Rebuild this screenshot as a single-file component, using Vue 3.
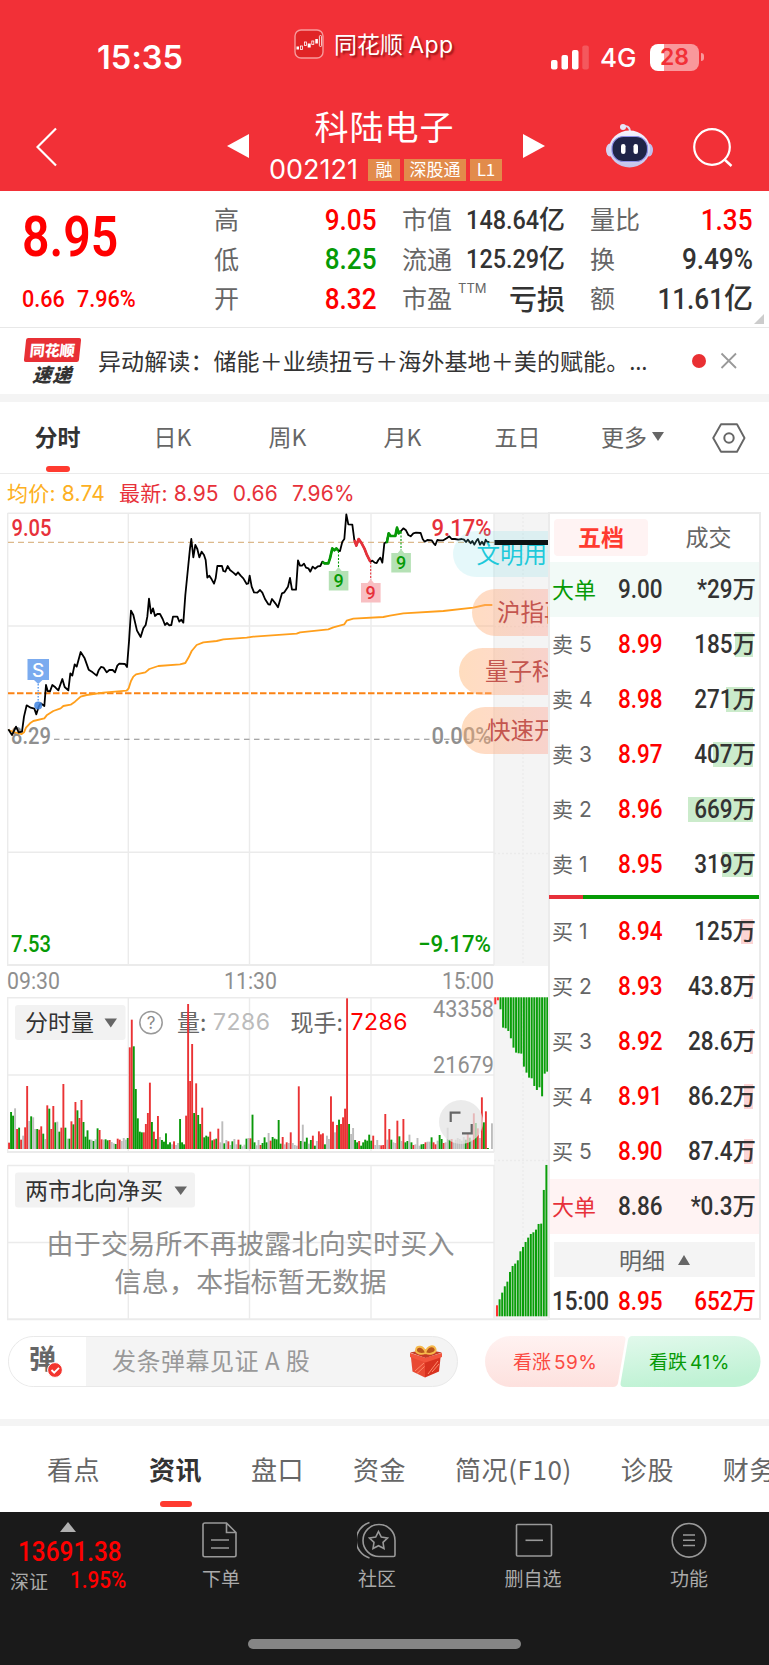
<template>
    <div class="page">
        <header class="header">
            <div class="status">
                <div class="clock">15:35</div>
                <div class="brand">
                    <svg width="30" height="30" viewBox="0 0 30 30">
                        <rect x="1" y="1" width="28" height="28" rx="6" fill="#e02426" stroke="#f79a9c" stroke-width="1.4" />
                        <rect x="2.5" y="17.5" width="2.5" height="3" fill="#fff" />
                        <rect x="6.5" y="17" width="2" height="3.5" fill="none" stroke="#fff" stroke-width=".8" />
                        <rect x="10.5" y="13" width="2" height="3.5" fill="none" stroke="#fff" stroke-width=".8" />
                        <rect x="13.7" y="14.5" width="3" height="4" fill="#fff" />
                        <rect x="17.8" y="12" width="2" height="3.5" fill="none" stroke="#fff" stroke-width=".8" />
                        <rect x="21.3" y="10" width="2.6" height="4.5" fill="#fff" />
                        <rect x="25.4" y="6.5" width="2.2" height="11" rx="1" fill="none" stroke="#fff" stroke-width=".8" />
                    </svg>
                    <span>同花顺 <span class="app">App</span></span>
                </div>
                <svg class="signal" width="40" height="26" viewBox="0 0 40 26">
                    <rect x="1" y="15" width="6.5" height="9.5" rx="2" fill="#fff" />
                    <rect x="11.5" y="10" width="6.5" height="14.5" rx="2" fill="#fff" />
                    <rect x="22" y="5" width="6.5" height="19.5" rx="2" fill="#fff" />
                    <rect x="32.3" y="0.5" width="6.5" height="24" rx="2" fill="#f4585d" />
                </svg>
                <div class="net">4G</div>
                <div class="battery">28</div>
                <div class="cap"></div>
            </div>
            <div class="nav">
                <svg class="back" width="22" height="40" viewBox="0 0 22 40">
                    <path d="M20 1.5L1.5 20L20 38.5" fill="none" stroke="#fff" stroke-width="2.2" />
                </svg>
                <div class="arrow left"></div>
                <div class="stock">
                    <div class="name">科陆电子</div>
                    <div class="code">
                        <span class="num">002121</span>
                        <i>融</i><i class="wide">深股通</i><i>L1</i>
                    </div>
                </div>
                <div class="arrow right"></div>
                <svg class="robot" width="50" height="46" viewBox="0 0 50 46">
                    <defs>
                        <linearGradient id="head" x1="0" y1="0" x2="0" y2="1">
                            <stop offset="0" stop-color="#f6f4fc" />
                            <stop offset="1" stop-color="#c3c3ec" />
                        </linearGradient>
                    </defs>
                    <path d="M17 4C22 2 25 4 25 9" fill="none" stroke="#dcdcf2" stroke-width="1.8" />
                    <circle cx="18" cy="4" r="3" fill="#e6e6f8" />
                    <ellipse cx="5" cy="27" rx="4" ry="6.5" fill="#d4d3f2" />
                    <ellipse cx="44" cy="27" rx="4" ry="6.5" fill="#bfc0ee" />
                    <ellipse cx="24.5" cy="26" rx="20.5" ry="18.5" fill="url(#head)" />
                    <rect x="7" y="13.5" width="35.5" height="25" rx="11.500" fill="#1f2447" stroke="#8d8fe8" stroke-width="1.2" />
                    <rect x="16" y="21" width="4.5" height="10" rx="2.2" fill="#fff" />
                    <rect x="28.5" y="21" width="4.5" height="10" rx="2.2" fill="#fff" />
                </svg>
                <svg class="search" width="42" height="42" viewBox="0 0 42 42">
                    <circle cx="20" cy="20" r="17.8" fill="none" stroke="#fff" stroke-width="2.2" />
                    <path d="M32 32L39.5 39" stroke="#fff" stroke-width="2.4" />
                </svg>
            </div>
        </header>

        <section class="quote">
            <div class="price">
                <div class="last"><span class="din">8.95</span></div>
                <div class="chg"><span class="din">0.66</span><span class="din">7.96%</span></div>
            </div>
            <dl v-for="(col, c) in quotes" :key="c" :class="'col' + c">
                <div v-for="q in col" :key="q.k">
                    <dt>{{ q.k }}<sup v-if="q.sup">{{ q.sup }}</sup></dt>
                    <dd :class="q.cls"><span v-if="q.v" class="din">{{ q.v }}</span>{{ q.u }}</dd>
                </div>
            </dl>
            <div class="corner"></div>
        </section>

        <section class="news">
            <div class="express">
                <b>同花顺</b>
                <em>速递</em>
            </div>
            <p>异动解读：储能＋业绩扭亏＋海外基地＋美的赋能。<span>…</span></p>
            <div class="dot"></div>
            <svg width="18" height="18" viewBox="0 0 18 18"><path d="M1.5 1.5L16 16M16 1.5L1.5 16" stroke="#999" stroke-width="1.8" /></svg>
        </section>

        <nav class="periods">
            <div v-for="(p, i) in periods" :key="p" :class="{ on: i === 0 }">{{ p }}<u v-if="i === 5"></u></div>
            <svg width="34" height="30" viewBox="0 0 34 30">
                <path d="M9 1.2H25L32.5 15L25 28.8H9L1.2 15Z" fill="none" stroke="#666" stroke-width="1.9" stroke-linejoin="round" />
                <circle cx="17" cy="15" r="4.7" fill="none" stroke="#666" stroke-width="2" />
            </svg>
        </nav>

        <div class="legend">
            <span class="avg">均价: 8.74</span><span>最新: 8.95</span><span>0.66</span><span>7.96%</span>
        </div>

        <div class="board">
            <svg class="chart" width="548" height="809" viewBox="0 512 548 809">
                <!-- grid -->
                <rect x="494" y="513" width="54" height="453" fill="#f4f4f4" />
                <rect x="494" y="997" width="54" height="322" fill="#f4f4f4" />
                <g fill="none" stroke="#ebebeb" stroke-width="1.4">
                    <path d="M7.7 513.3H548M7.7 513V965M494 513V965M7.7 626H494M7.7 852.3H494" />
                    <path d="M7.7 997.7H494V1152M7.7 997V1152M7.7 1075H494" />
                    <path d="M7.7 1165.5H494V1319M7.7 1165V1319M7.7 1242.5H494" />
                    <path d="M128.3 513V965M249.5 513V965M371 513V965M128.3 997V1152M249.5 997V1152M371 997V1152M128.3 1165V1319M249.5 1165V1319M371 1165V1319" />
                    <path d="M7 965H494M7 1152H494M7 1319.2H548" stroke-width="2" />
                    <path d="M523 513V965M523 998V1319M494 626.5H548M494 853.5H548M494 1160.5H548" stroke-dasharray="2 2" />
                </g>

                <!-- price labels -->
                <g class="lbl">
                    <text x="11.5" y="535.5" textLength="40" lengthAdjust="spacingAndGlyphs" fill="#e7313a">9.05</text>
                    <text x="11" y="743.5" textLength="40" lengthAdjust="spacingAndGlyphs" fill="#8f8f8f">8.29</text>
                    <text x="431.5" y="743.5" textLength="60" lengthAdjust="spacingAndGlyphs" fill="#8f8f8f">0.00%</text>
                    <text x="11" y="952" textLength="40" lengthAdjust="spacingAndGlyphs" fill="#069a06">7.53</text>
                    <text x="418" y="952" textLength="73" lengthAdjust="spacingAndGlyphs" fill="#069a06">−9.17%</text>
                </g>
                <g class="lbl thin" fill="#8f8f8f">
                    <text x="7" y="989" textLength="53" lengthAdjust="spacingAndGlyphs">09:30</text>
                    <text x="224" y="989" textLength="53" lengthAdjust="spacingAndGlyphs">11:30</text>
                    <text x="442" y="989" textLength="52" lengthAdjust="spacingAndGlyphs">15:00</text>
                    <text x="433" y="1017" textLength="61" lengthAdjust="spacingAndGlyphs">43358</text>
                    <text x="433" y="1073" textLength="61" lengthAdjust="spacingAndGlyphs">21679</text>
                </g>

                <path d="M8 542.3H494" stroke="#dcb98c" stroke-width="1.2" stroke-dasharray="6 4" />
                <path d="M54 739.3H490" stroke="#8a8a8a" stroke-width="1.1" stroke-dasharray="5.5 4.5" />
                <path d="M8 693.3H493" stroke="#fb8314" stroke-width="2" stroke-dasharray="6.5 2.5" />

                <!-- price and average lines, plotted at three units per pixel -->
                <g transform="translate(0 395) scale(.33333)" fill="none" stroke-linejoin="round">
                    <polyline :points="avgLine" stroke="#ff9f1c" stroke-width="5.5" />
                    <polyline :points="priceLine" stroke="#000" stroke-width="5.4" />
                    <polyline points="967,500 973,505 985,505 990,490 997,460 1003,466 1009,460 1015,467" stroke="#069a06" stroke-width="8" />
                    <polyline points="1063,435 1069,452 1076,432 1085,445 1093,460 1100,478 1111,500" stroke="#e7313a" stroke-width="8" />
                    <polyline points="1158,443 1161,441 1166,415 1172,423 1186,423 1191,398 1196,415 1203,408" stroke="#069a06" stroke-width="8" />
                </g>
                <text class="lbl" x="431.5" y="535.5" textLength="60" lengthAdjust="spacingAndGlyphs" fill="#e7313a">9.17%</text>

                <!-- signal flags -->
                <g v-for="f in flags" :key="f.x">
                    <path :d="`M${f.x} ${f.from}V${f.y - 3}`" :stroke="f.color" stroke-width="1.1" stroke-dasharray="2 1.5" />
                    <path :d="`M${f.x - 9.7} ${f.y}h6.5l3.2 -4l3.2 4h6.7v19.5h-19.6z`" :fill="f.bg" />
                    <text class="nine" :x="f.x" :y="f.y + 15.6" :fill="f.color">9</text>
                </g>
                <path d="M27.5 659H49V680H42.5L38.2 684L34 680H27.5Z" fill="#7babef" />
                <path d="M38.2 684V703" stroke="#5a9af0" stroke-width="1.4" stroke-dasharray="1.6 1.4" />
                <circle cx="38.2" cy="705.5" r="4" fill="#3f84e0" opacity=".85" />
                <text class="sell" x="38.2" y="676.5">S</text>

                <!-- floating comments, cut by the panel edge -->
                <defs>
                    <linearGradient id="peach" gradientUnits="userSpaceOnUse" x1="455" y1="0" x2="548" y2="0">
                        <stop offset="0" stop-color="#ffb46e" stop-opacity=".45" />
                        <stop offset="1" stop-color="#ff9d8b" stop-opacity=".38" />
                    </linearGradient>
                </defs>
                <g class="bubble">
                    <path d="M548 531H476A23 23 0 0 0 476 577H548Z" fill="#62d4e3" fill-opacity=".17" />
                    <text x="476.5" y="563" fill="#1fc9da">文明用语</text>
                    <g v-for="b in bubbles" :key="b.text">
                        <path :d="`M548 ${b.y}H${b.x + 23.5}a23.5 23.5 0 0 0 0 47H548Z`" fill="url(#peach)" />
                        <text :x="b.tx" :y="b.y + 32" fill="#c4564f">{{ b.text }}</text>
                    </g>
                </g>
                <rect x="494.5" y="540" width="53.5" height="5" fill="#0b1213" />

                <!-- volume -->
                <rect x="15" y="1005" width="110.5" height="35" rx="3" fill="#f2f2f2" />
                <g class="vol">
                    <text x="25" y="1031" fill="#333">分时量</text>
                    <path d="M104.5 1018.5H117L110.8 1027.5Z" fill="#666" />
                    <circle cx="151" cy="1022.6" r="11.2" fill="none" stroke="#999" stroke-width="1.5" />
                    <text class="q" x="151" y="1029">?</text>
                    <text x="177" y="1031" fill="#666">量:</text>
                    <text class="fig" x="213" y="1030" textLength="57" fill="#bbb">7286</text>
                    <text x="290.5" y="1031" fill="#666">现手:</text>
                </g>
                <rect v-for="b in bars" :key="b.x" :x="b.x" :y="1149 - b.h" width="1.9" :height="b.h" :fill="b.color" />
                <text class="fig" x="350.5" y="1030" textLength="57" fill="#f00">7286</text>
                <circle cx="461" cy="1122" r="22" fill="#e4e4e4" fill-opacity=".75" />
                <path d="M450.7 1122V1112.7H460.5M471.7 1124V1133.3H462" fill="none" stroke="#666" stroke-width="2.2" />

                <!-- depth histogram -->
                <rect v-for="(h, i) in sellDepth" :key="'s' + i" :x="494.3 + i * 2.6" y="997.3" width="2" :height="h / 3" :fill="i < 2 ? '#f33' : '#0a9e0a'" />
                <rect v-for="(h, i) in buyDepth" :key="'b' + i" :x="496 + i * 2.6" :y="1316.3 - h / 3" width="2" :height="h / 3" :fill="i < 1 ? '#f33' : '#0a9e0a'" />

                <!-- northbound -->
                <rect x="15" y="1172.5" width="180" height="35" rx="3" fill="#f2f2f2" />
                <g class="vol">
                    <text x="25" y="1198.5" textLength="138" fill="#333">两市北向净买</text>
                    <path d="M174.5 1186.5H187L180.7 1195Z" fill="#666" />
                </g>
                <g class="msg">
                    <text x="46.5" y="1254" textLength="408">由于交易所不再披露北向实时买入</text>
                    <text x="114.5" y="1292" textLength="272">信息，本指标暂无数据</text>
                </g>
            </svg>

            <aside class="depth">
                <div class="switch"><b>五档</b><span>成交</span></div>
                <div v-for="r in sells" :key="r.k" class="row" :class="{ big: r.big }">
                    <span>{{ r.k }}</span>
                    <strong><span class="din">{{ r.p }}</span></strong>
                    <em><i :style="{ width: r.w + 'px' }"></i><span class="din">{{ r.v }}</span><s>万</s></em>
                </div>
                <div class="ratio"><i></i></div>
                <div v-for="r in buys" :key="r.k" class="row buy" :class="{ big: r.big }">
                    <span>{{ r.k }}</span>
                    <strong><span class="din">{{ r.p }}</span></strong>
                    <em><i :style="{ width: r.w + 'px' }"></i><span class="din">{{ r.v }}</span><s>万</s></em>
                </div>
                <div class="detail">明细<u></u></div>
                <div class="row deal">
                    <span><span class="din">15:00</span></span>
                    <strong><span class="din">8.95</span></strong>
                    <em><span class="din">652</span><s>万</s></em>
                </div>
            </aside>
        </div>

        <div class="danmu">
            <div class="field">
                <div class="toggle">
                    <b>弹</b>
                    <svg width="16" height="16" viewBox="0 0 16 16">
                        <circle cx="8" cy="8" r="7.4" fill="#f3352f" stroke="#fff" stroke-width="1" />
                        <path d="M4.5 8L7.2 10.6L12 5.8" fill="none" stroke="#fff" stroke-width="1.9" />
                    </svg>
                </div>
                <span>发条弹幕见证 A 股</span>
                <svg class="gift" width="34" height="36" viewBox="0 0 34 36">
                    <path d="M1.5 9.5L16 14V33.5L3.5 27.5Z" fill="#e94a33" />
                    <path d="M32 9.5L16 14V33.5L30 27.5Z" fill="#d8321f" />
                    <path d="M1 8.5L17 5.5L33 8.5L16.5 14Z" fill="#c43a26" />
                    <path d="M1 9L16.5 14L33 9V13L16.5 18.5L1 13Z" fill="#f2553d" />
                    <path d="M6 27L15 19M8 29.5L15.5 22.5M19 30L29 17M23 28L30 20" stroke="#ff8a6a" stroke-width="1" />
                    <path d="M16.5 9C12 11 6 9 7 5.5C8 1.5 14 1.5 16.5 8C19 1 25 1 26.5 5C27.5 9 21 11 16.5 9Z" fill="#b8561c" stroke="#f6b94b" stroke-width="1.9" />
                </svg>
            </div>
            <div class="vote">
                <svg width="276" height="51" viewBox="0 0 276 51">
                    <defs>
                        <linearGradient id="up" x1="0" y1="0" x2="0" y2="1">
                            <stop offset="0" stop-color="#fff2f1" />
                            <stop offset="1" stop-color="#fde1de" />
                        </linearGradient>
                        <linearGradient id="down" x1="0" y1="0" x2=".3" y2="1">
                            <stop offset="0" stop-color="#e2f9ec" />
                            <stop offset="1" stop-color="#bff2d4" />
                        </linearGradient>
                    </defs>
                    <path d="M25.5 0H137Q141 0 140.4 4L133 47Q132 51 128 51H25.5A25.5 25.5 0 0 1 25.5 0Z" fill="url(#up)" />
                    <path d="M147 0H250A25.5 25.5 0 0 1 250 51H139Q135 51 135.6 47L143 4Q144 0 147 0Z" fill="url(#down)" />
                </svg>
                <div class="votes"><span>看涨<b>59%</b></span><span class="fall">看跌<b>41%</b></span></div>
            </div>
        </div>

        <nav class="sections">
            <div v-for="s in sections" :key="s" :class="{ on: s === '资讯' }">{{ s }}</div>
        </nav>

        <footer class="bottom">
            <div class="bar">
                <div class="index">
                    <u></u>
                    <div class="point"><span class="din">13691.38</span></div>
                    <div class="market">深证<span class="din">1.95%</span></div>
                </div>
                <div class="item">
                    <svg width="40" height="38" viewBox="0 0 40 38">
                        <path d="M4 2H25.5L35 11.5V34Q35 35.7 33.3 35.7H3.7Q2 35.7 2 34V3.700Q2 2 4 2ZM25.5 2V11.5H35M10 19H28M10 27H28" />
                    </svg>
                    下单
                </div>
                <div class="item">
                    <svg width="40" height="38" viewBox="0 0 40 38">
                        <path d="M22 3.5A16 16 0 1 0 22 35.5H36.5Q38 35.5 38 34V19.5A16 16 0 0 0 22 3.5Z" />
                        <path d="M12.5 1.5A18.5 18.5 0 0 0 12.5 37" />
                        <path d="M21.5 10.500L24.3 16L30.5 17L26 21.3L27 27.500L21.5 24.700L16 27.500L17 21.300L12.5 17L18.7 16Z" />
                    </svg>
                    社区
                </div>
                <div class="item">
                    <svg width="40" height="38" viewBox="0 0 40 38">
                        <rect x="3.5" y="3.5" width="35" height="31.5" rx="1" />
                        <path d="M12.5 19.3H30" />
                    </svg>
                    删自选
                </div>
                <div class="item">
                    <svg width="40" height="38" viewBox="0 0 40 38">
                        <circle cx="20" cy="19.3" r="16.8" />
                        <path d="M14 14H26M14 19.3H26M14 24.5H26" />
                    </svg>
                    功能
                </div>
            </div>
            <div class="home"></div>
        </footer>
    </div>
</template>

<script setup>
const periods = ['分时', '日K', '周K', '月K', '五日', '更多'];
const sections = ['看点', '资讯', '盘口', '资金', '简况(F10)', '诊股', '财务'];

const quotes = [
    [
        { k: '高', v: '9.05', cls: 'red' },
        { k: '低', v: '8.25', cls: 'green' },
        { k: '开', v: '8.32', cls: 'red' },
    ],
    [
        { k: '市值', v: '148.64', u: '亿' },
        { k: '流通', v: '125.29', u: '亿' },
        { k: '市盈', sup: 'TTM', u: '亏损', cls: 'loss' },
    ],
    [
        { k: '量比', v: '1.35', cls: 'red' },
        { k: '换', v: '9.49%' },
        { k: '额', v: '11.61', u: '亿' },
    ],
];

const sells = [
    { k: '大单', p: '9.00', v: '*29', w: 0, big: true },
    { k: '卖 5', p: '8.99', v: '185', w: 18 },
    { k: '卖 4', p: '8.98', v: '271', w: 27 },
    { k: '卖 3', p: '8.97', v: '407', w: 40 },
    { k: '卖 2', p: '8.96', v: '669', w: 65 },
    { k: '卖 1', p: '8.95', v: '319', w: 31 },
];
const buys = [
    { k: '买 1', p: '8.94', v: '125', w: 12.5 },
    { k: '买 2', p: '8.93', v: '43.8', w: 4.5 },
    { k: '买 3', p: '8.92', v: '28.6', w: 3 },
    { k: '买 4', p: '8.91', v: '86.2', w: 9 },
    { k: '买 5', p: '8.90', v: '87.4', w: 9 },
    { k: '大单', p: '8.86', v: '*0.3', w: 0, big: true },
];

const flags = [
    { x: 338.5, y: 571, from: 551, color: '#069a06', bg: '#b5e1b5' },
    { x: 370.7, y: 583, from: 562, color: '#e7313a', bg: '#f8bfc2' },
    { x: 401, y: 553, from: 532, color: '#069a06', bg: '#b5e1b5' },
];

const bubbles = [
    { x: 472, y: 589, tx: 497, text: '沪指再' },
    { x: 459, y: 648, tx: 485, text: '量子科' },
    { x: 461.5, y: 707, tx: 487, text: '快速开' },
];

const priceLine = `25,1003 36,1020 48,995 56,1012 66,1010 72,965 80,931 92,938 103,941 109,958 116,935 122,925 133,933
138,870 143,888 150,889 157,870 166,877 175,886 187,852 194,876 205,886 211,835 217,842 224,808 230,815 242,771 254,790
266,824 278,832 290,842 296,826 303,816 311,818 320,832 328,825 338,825 345,832 352,812 358,806 375,807 381,816 387,740
393,647 400,660 411,707 422,726 430,700 437,690 442,665 447,611 453,655 459,640 465,663 472,657 480,657 488,672 495,690
501,684 508,691 514,690 519,665 532,665 538,680 544,674 550,683 556,600 565,510 570,460 574,432 580,487 586,450 592,462
598,487 605,470 612,480 617,495 622,548 628,542 635,553 642,566 647,550 652,513 666,513 670,528 676,530 683,513 690,525
700,533 708,540 714,532 722,542 730,550 740,567 745,565 749,542 755,575 762,592 772,593 780,585 787,593 795,612 805,628
810,629 816,612 826,625 834,637 846,595 853,592 864,575 870,549 876,584 888,584 894,496 900,512 906,512 912,506 918,518
925,520 931,530 938,515 945,521 954,514 961,513 967,500 973,505 985,505 990,490 997,460 1003,466 1009,460 1015,467
1020,468 1027,440 1033,432 1039,358 1045,388 1057,389 1063,435 1069,452 1076,432 1085,445 1093,460 1100,478 1111,500
1117,497 1124,503 1130,504 1135,495 1141,488 1147,503 1153,445 1160,441 1166,415 1172,423 1186,423 1191,398 1196,415
1203,408 1210,400 1218,406 1225,420 1232,424 1240,415 1248,413 1262,414 1268,432 1274,440 1282,435 1295,436 1301,445
1306,450 1312,435 1320,436 1330,436 1340,430 1348,424 1355,432 1365,432 1375,434 1385,432 1392,434 1398,441 1404,434
1412,445 1417,438 1423,449 1430,436 1434,432 1440,449 1446,440 1452,450 1457,434 1462,441 1468,441`;

const avgLine = `25,1005 45,1012 65,1017 72,1012 78,998 90,985 100,978 133,970 140,961 160,948 182,940 190,933 212,929
225,920 242,905 260,900 310,893 380,887 386,880 393,858 400,845 408,838 436,832 448,822 475,813 540,808 556,804 566,787
575,768 590,750 610,742 650,738 670,733 740,728 760,725 890,716 900,712 985,703 1000,697 1033,688 1040,677 1060,671
1150,666 1170,662 1210,655 1330,648 1420,638 1455,630 1477,630`;

// one entry per minute: r up, g down, x flat
const volumes = `r19 g111 g100 x122 r60 g64 r28 x40 r65 r189 x84 g98 x95 x60 g60 r58 r68 g46 x30 r131 g121 r60 r129 g80 x82
g52 r64 r195 g64 x31 g31 r83 g74 r141 g116 r93 r147 g81 g37 g56 g28 x28 g24 x29 g62 r57 r29 x28 g29 g26 r27 x21 x17 g15
r31 r28 x24 x33 x28 g33 r305 r388 g308 g180 g92 g52 g50 r50 r75 r108 r199 g81 r52 g30 r99 x36 g27 g22 g47 g14 g20 x14 r23
x12 x18 g90 g20 g14 r100 r435 r204 r315 g108 r197 g102 g75 r124 g35 g40 g37 r52 g26 r29 g31 r61 x20 x83 g17 x27 r23 x12
g23 x30 x14 r28 g13 x8 x13 g31 x33 r32 g103 g20 x11 x27 r12 g18 g35 g20 x48 r25 g36 g31 g29 g87 g16 r36 x14 r20 x18 r50
x18 x12 x10 r188 g24 x73 g22 g34 x16 g27 r40 g10 x24 r53 r44 r47 g14 x40 x30 r158 r82 x50 r72 g88 r75 r95 r121 r452 g75
x45 x63 g27 g20 r24 g10 g20 g28 g25 g43 g25 r40 x12 x27 x12 r11 r12 r105 x28 r60 g28 x20 x18 r85 g38 x24 r90 g20 g24 x43
g20 r12 x14 x33 x10 g14 g15 r20 x22 x22 g35 r20 r14 x25 g42 g30 r18 x20 x64 g28 r30 x20 x28 x33 x30 x25 x36 g28 r45 g34
x28 r107 g78 r62 x33 r155 g80 r113 g3 x0 x77`;
const palette = { r: '#ea3335', g: '#0a980a', x: '#bdbdbd' };
const bars = volumes.split(/\s+/).map((s, i) => ({
    x: 8.1 + i * 2.012,
    h: Number(s.slice(1)) / 3,
    color: palette[s[0]],
}));

const sellDepth = [21, 9, 36, 91, 93, 101, 123, 151, 166, 168, 169, 208, 226, 241, 243, 266, 278, 270, 297, 229, 223];
const buyDepth = [33, 51, 71, 90, 104, 133, 151, 158, 168, 195, 208, 223, 236, 247, 252, 260, 277, 278, 379, 454];
</script>

<style>
body {
    margin: 0;
    background: #fff;
}
</style>

<style scoped>
.page {
    width: 769px;
    height: 1665px;
    overflow: hidden;
    font-family: "Noto Sans CJK SC", sans-serif;
    font-size: 23px;
    line-height: 1;
    color: #333;
    background: #fff;
}

svg {
    display: block;
    flex: none;
}

.din {
    display: inline-block;
    font-family: Roboto, "Noto Sans CJK SC", sans-serif;
    font-weight: 500;
    transform: scaleX(0.9);
    transform-origin: right center;
}

.red {
    color: #f00;
}

.green {
    color: #069a06;
}

.header {
    height: 191px;
    background: #f23037;
    color: #fff;
}

.status {
    height: 100px;
    display: flex;
    align-items: flex-start;
    white-space: nowrap;
}

.clock {
    width: 197px;
    padding: 42px 0 0 97px;
    font: 600 32.5px/1 Inter, sans-serif;
    letter-spacing: 0.1px;
}

.brand {
    width: 256px;
    display: flex;
    align-items: center;
    gap: 10px;
    padding-top: 29px;
    text-shadow: 2px 2px 2px rgba(90, 0, 0, 0.6);
}

.app {
    font-family: Inter, sans-serif;
    letter-spacing: 0.5px;
}

.signal {
    margin-top: 45px;
}

.net {
    width: 48px;
    padding: 45px 0 0 10px;
    box-sizing: border-box;
    font: 500 26px/1 Inter, sans-serif;
}

.battery {
    width: 49px;
    height: 27px;
    margin-top: 44px;
    margin-left: 12px;
    border-radius: 8px;
    background: linear-gradient(90deg, #fff 14px, #f9989b 14px);
    color: #f23037;
    font: 600 23px/27px Inter, sans-serif;
    text-align: center;
}

.cap {
    width: 2.5px;
    height: 8px;
    margin: 53px 0 0 2px;
    border-radius: 0 3px 3px 0;
    background: #f9989b;
}

.nav {
    height: 91px;
    display: flex;
    align-items: flex-start;
}

.back {
    margin: 27px 0 0 36px;
}

.arrow {
    border: solid transparent;
    border-width: 12.5px 0;
    margin-top: 34px;
}

.arrow.left {
    border-right: 22px solid #fff;
    margin-left: 169px;
}

.arrow.right {
    border-left: 22px solid #fff;
}

.stock {
    width: 274px;
    padding-top: 9px;
    text-align: center;
}

.name {
    font-size: 34px;
    height: 50px;
    letter-spacing: 1px;
    padding-right: 3px;
}

.code {
    display: flex;
    align-items: center;
    margin-left: 20px;
}

.num {
    font: 400 27px/22px Inter, sans-serif;
    margin-right: 10px;
}

.code i {
    width: 32px;
    height: 22px;
    margin-right: 4px;
    background: #e28b4b;
    font-style: normal;
    font-size: 17px;
    line-height: 20px;
}

.code .wide {
    width: 62px;
}

.robot {
    margin: 23px 0 0 60px;
}

.search {
    margin: 27px 0 0 37px;
}

.quote {
    height: 137px;
    box-sizing: border-box;
    border-bottom: 1px solid #e8e8e8;
    display: flex;
}

.price {
    width: 214px;
    box-sizing: border-box;
    padding-left: 22px;
    color: #f00;
}

.price .din {
    transform-origin: left center;
}

.last {
    margin-top: 17px;
    font-size: 56px;
    height: 70px;
    margin-top: 13px;
    height: 83px;
}

.last .din {
    font-weight: 600;
    transform: scaleX(0.86);
}

.chg {
    display: flex;
    font-size: 24px;
    gap: 7px;
}

.quote dl {
    margin: 8px 0 0;
}

.quote dl > div {
    display: flex;
    justify-content: space-between;
    align-items: center;
    height: 39.5px;
}

.quote dt {
    display: flex;
    font-size: 25px;
    color: #666;
}

.quote dd {
    margin: 0;
    font-size: 29px;
    font-weight: 500;
    white-space: nowrap;
}

.quote sup {
    width: 0;
    margin: -3px 0 0 6px;
    font: 13px/1 Inter, sans-serif;
}

.quote .col0 {
    width: 163px;
}

.quote .col1 {
    width: 163px;
    margin-left: 25px;
}

.quote .col1 dd {
    font-size: 26px;
}

.quote .col1 .loss {
    font-size: 28px;
}

.quote .col2 {
    width: 163px;
    margin-left: 25px;
}

.corner {
    align-self: flex-end;
    margin: 0 0 3px 1px;
    border-left: 10px solid transparent;
    border-bottom: 10px solid #ccc;
}

.news {
    height: 66px;
    display: flex;
    align-items: center;
    border-bottom: 8px solid #f4f4f4;
}

.express {
    width: 55px;
    margin-left: 25px;
    text-align: center;
}

.express b {
    display: block;
    height: 24px;
    border-radius: 2px;
    background: #e83035;
    color: #fff;
    font-size: 15px;
    font-weight: 900;
    line-height: 24px;
    transform: skewX(-6deg);
}

.express em {
    display: block;
    height: 23px;
    font-size: 19px;
    font-weight: 900;
    line-height: 23px;
    letter-spacing: 1px;
    transform: skewX(-4deg);
}

.news p {
    width: 592px;
    margin: 0 0 0 18px;
    font-size: 23px;
    letter-spacing: 0.1px;
    white-space: nowrap;
}

.news p span {
    font-family: "Noto Sans", sans-serif;
}

.dot {
    width: 14px;
    height: 14px;
    margin: 0 14px 0 2px;
    border-radius: 50%;
    background: #e93033;
}

.periods {
    height: 71px;
    display: grid;
    grid-template-columns: repeat(6, 115px) 34px;
    align-items: center;
    border-bottom: 1px solid #ebebeb;
    color: #666;
    font-size: 23px;
}

.periods > div {
    height: 71px;
    display: flex;
    align-items: center;
    justify-content: center;
    box-sizing: border-box;
    padding-bottom: 2px;
    position: relative;
}

.periods svg {
    margin-left: 22px;
}

.periods .on,
.sections .on {
    color: #333;
    font-weight: 700;
}

.periods .on::after {
    content: "";
    position: absolute;
    bottom: 1px;
    width: 24px;
    height: 6px;
    border-radius: 3px;
    background: #ff3b30;
}

.periods u {
    margin-left: 5px;
    border: 6px solid transparent;
    border-top: 9px solid #666;
    border-bottom: 0;
}

.legend {
    height: 38px;
    display: flex;
    align-items: center;
    gap: 14px;
    padding-left: 7px;
    color: #e7313a;
    font: 21px/1 Inter, "Noto Sans CJK SC", sans-serif;
    letter-spacing: 0.2px;
}

.legend .avg {
    color: #fdb022;
}

.board {
    display: flex;
    height: 809px;
}

.chart {
    overflow: hidden;
}

.lbl,
.lbl text {
    font: 500 23px Roboto, sans-serif;
}

.lbl.thin text {
    font-weight: 400;
}

.nine {
    font: 500 18px Roboto, sans-serif;
    text-anchor: middle;
}

.sell {
    font: 500 19px Inter, sans-serif;
    text-anchor: middle;
    fill: #fff;
}

.bubble text {
    font-size: 23.5px;
}

.vol text {
    font-size: 23px;
}

.vol .q {
    font: 17px Inter, sans-serif;
    text-anchor: middle;
    fill: #888;
}

.fig,
.vol .fig {
    font: 23px Inter, sans-serif;
}

.msg text {
    font-size: 27px;
    fill: #8e8e8e;
}

.depth {
    width: 213px;
    height: 808px;
    box-sizing: border-box;
    border: 2px solid #ebebeb;
}

.switch {
    display: flex;
    height: 48px;
    box-sizing: border-box;
    padding: 5px 4px;
    text-align: center;
    line-height: 34px;
}

.switch b {
    width: 94px;
    height: 37px;
    border-radius: 4px;
    background: #fff3f3;
    color: #ff3b30;
}

.switch span {
    flex: 1;
    padding-left: 14px;
    color: #666;
}

.row {
    height: 55px;
    display: grid;
    grid-template-columns: 66px 50px 1fr;
    align-items: center;
    padding: 0 3px 0 2px;
    font: 21px/1 Inter, "Noto Sans CJK SC", sans-serif;
    color: #666;
    white-space: nowrap;
}

.row strong {
    font-size: 25px;
    color: #f00;
}

.row strong .din {
    transform-origin: left center;
}

.row em {
    display: flex;
    align-items: center;
    position: relative;
    justify-self: end;
    font-style: normal;
    font-weight: 500;
    color: #333;
}

.row em .din {
    position: relative;
    font-size: 25px;
}

.row em s {
    position: relative;
    font-size: 23.5px;
    text-decoration: none;
}

.row em i {
    position: absolute;
    right: 3px;
    top: 0;
    height: 25px;
    background: rgba(10, 160, 10, 0.21);
}

.buy em i {
    background: rgba(240, 40, 40, 0.2);
}

.big {
    background: #f2faf7;
    color: #069a06;
    font-size: 22px;
}

.big strong {
    color: #333;
}

.buy.big {
    background: #fff3f3;
    color: #e7313a;
}

.ratio {
    height: 4px;
    margin: 3px 0 5px -1px;
    background: #069a06;
}

.ratio i {
    display: block;
    width: 34px;
    height: 4px;
    background: #e7313a;
}

.detail {
    display: flex;
    align-items: center;
    justify-content: center;
    gap: 13px;
    height: 35px;
    margin: 8px 4px 0;
    background: #f4f4f4;
    color: #666;
}

.detail u {
    border: 6.5px solid transparent;
    border-bottom: 10px solid #666;
    border-top: 0;
}

.row.deal {
    height: 48px;
}

.deal > span {
    font-size: 25px;
    color: #333;
}

.deal > span .din {
    transform-origin: left center;
}

.deal em {
    color: #f00;
}

.danmu {
    height: 98px;
    box-sizing: border-box;
    display: flex;
    padding: 15px 8px 0;
}

.field {
    width: 450px;
    height: 51px;
    box-sizing: border-box;
    display: flex;
    align-items: center;
    border: 1px solid #e9e9e9;
    border-radius: 26px;
    background: #f4f4f4;
    overflow: hidden;
    color: #999;
    font-size: 24px;
}

.field span {
    width: 297px;
    margin-left: 26px;
    margin-top: -3px;
    letter-spacing: 0.5px;
}

.toggle {
    width: 77px;
    height: 50px;
    display: flex;
    align-items: center;
    box-sizing: border-box;
    padding-left: 20px;
    background: #fff;
    color: #666;
    font-size: 27px;
}

.toggle b {
    margin-top: -8px;
}

.toggle svg {
    margin: 17px 0 0 -9px;
}

.vote {
    display: grid;
    margin-left: 27px;
}

.vote > * {
    grid-area: 1 / 1;
}

.votes {
    display: flex;
    height: 51px;
    align-items: center;
    color: #fb4a42;
    font-size: 19px;
    white-space: nowrap;
}

.votes span {
    width: 136px;
    padding-left: 28px;
    box-sizing: border-box;
}

.votes .fall {
    color: #069a06;
}

.votes b {
    margin-left: 3px;
    font: 400 19px/1 Inter, sans-serif;
    letter-spacing: 0.5px;
}

.sections {
    height: 93px;
    box-sizing: border-box;
    display: flex;
    gap: 48.8px;
    padding: 0 0 0 47px;
    border-top: 7px solid #f4f4f4;
    color: #666;
    font-size: 26px;
    letter-spacing: 0.6px;
    white-space: nowrap;
}

.sections > div {
    flex: none;
    display: flex;
    justify-content: center;
    position: relative;
    padding-top: 30px;
}

.sections .on::after {
    content: "";
    position: absolute;
    top: 75px;
    width: 32px;
    height: 6px;
    border-radius: 3px;
    background: #ff3b30;
}

.bottom {
    height: 153px;
    background: #1a1a1a;
    color: #aaa;
}

.bar {
    height: 127px;
    display: flex;
    font-size: 19px;
}

.index {
    width: 143px;
    padding-top: 10px;
}

.index u {
    display: block;
    width: 0;
    margin-left: 60px;
    border: 8.5px solid transparent;
    border-bottom: 10px solid #b0b0b0;
    border-top: 0;
}

.point {
    margin: 3px 0 0 18px;
    color: #f00;
    font-size: 28px;
}

.point .din {
    transform: scaleX(0.87);
    transform-origin: left center;
}

.market {
    display: flex;
    align-items: center;
    margin: 3px 0 0 10px;
}

.market .din {
    margin-left: 22px;
    color: #f00;
    font-size: 23px;
    transform-origin: left center;
}

.item {
    width: 156px;
    display: flex;
    flex-direction: column;
    align-items: center;
    gap: 9px;
    padding-top: 9px;
}

.item svg {
    fill: none;
    stroke: #999;
    stroke-width: 1.6;
}

.home {
    width: 273px;
    height: 10px;
    margin-left: 248px;
    border-radius: 5px;
    background: #858585;
}
</style>
